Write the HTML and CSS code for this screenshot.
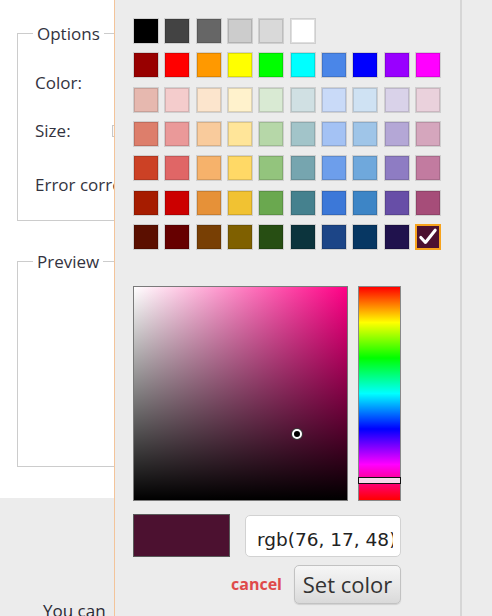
FILE: index.html
```html
<!DOCTYPE html>
<html>
<head>
<meta charset="utf-8">
<link rel="stylesheet" href="styles.css">
</head>
<body>
<div class="page">
  <div class="form">
    <fieldset class="group options">
      <legend>Options</legend>
      <div class="field f-color">Color:</div>
      <div class="field f-size">Size:<span class="size-input"></span></div>
      <div class="field f-error">Error correction</div>
    </fieldset>
    <fieldset class="group preview">
      <legend>Preview</legend>
      <div class="preview-area"></div>
    </fieldset>
  </div>
  <div class="footer">You can</div>
</div>

<div class="popup">
  <div class="palette">
    <span class="sw" style="background:#000000"></span>
    <span class="sw" style="background:#434343"></span>
    <span class="sw" style="background:#666666"></span>
    <span class="sw" style="background:#cccccc"></span>
    <span class="sw" style="background:#d9d9d9"></span>
    <span class="sw" style="background:#ffffff"></span>
    <span class="spacer"></span>

    <span class="sw" style="background:#980000"></span>
    <span class="sw" style="background:#ff0000"></span>
    <span class="sw" style="background:#ff9900"></span>
    <span class="sw" style="background:#ffff00"></span>
    <span class="sw" style="background:#00ff00"></span>
    <span class="sw" style="background:#00ffff"></span>
    <span class="sw" style="background:#4a86e8"></span>
    <span class="sw" style="background:#0000ff"></span>
    <span class="sw" style="background:#9900ff"></span>
    <span class="sw" style="background:#ff00ff"></span>

    <span class="sw" style="background:#e6b8af"></span>
    <span class="sw" style="background:#f4cccc"></span>
    <span class="sw" style="background:#fce5cd"></span>
    <span class="sw" style="background:#fff2cc"></span>
    <span class="sw" style="background:#d9ead3"></span>
    <span class="sw" style="background:#d0e0e3"></span>
    <span class="sw" style="background:#c9daf8"></span>
    <span class="sw" style="background:#cfe2f3"></span>
    <span class="sw" style="background:#d9d2e9"></span>
    <span class="sw" style="background:#ead1dc"></span>

    <span class="sw" style="background:#dd7e6b"></span>
    <span class="sw" style="background:#ea9999"></span>
    <span class="sw" style="background:#f9cb9c"></span>
    <span class="sw" style="background:#ffe599"></span>
    <span class="sw" style="background:#b6d7a8"></span>
    <span class="sw" style="background:#a2c4c9"></span>
    <span class="sw" style="background:#a4c2f4"></span>
    <span class="sw" style="background:#9fc5e8"></span>
    <span class="sw" style="background:#b4a7d6"></span>
    <span class="sw" style="background:#d5a6bd"></span>

    <span class="sw" style="background:#cc4125"></span>
    <span class="sw" style="background:#e06666"></span>
    <span class="sw" style="background:#f6b26b"></span>
    <span class="sw" style="background:#ffd966"></span>
    <span class="sw" style="background:#93c47d"></span>
    <span class="sw" style="background:#76a5af"></span>
    <span class="sw" style="background:#6d9eeb"></span>
    <span class="sw" style="background:#6fa8dc"></span>
    <span class="sw" style="background:#8e7cc3"></span>
    <span class="sw" style="background:#c27ba0"></span>

    <span class="sw" style="background:#a61c00"></span>
    <span class="sw" style="background:#cc0000"></span>
    <span class="sw" style="background:#e69138"></span>
    <span class="sw" style="background:#f1c232"></span>
    <span class="sw" style="background:#6aa84f"></span>
    <span class="sw" style="background:#45818e"></span>
    <span class="sw" style="background:#3c78d8"></span>
    <span class="sw" style="background:#3d85c6"></span>
    <span class="sw" style="background:#674ea7"></span>
    <span class="sw" style="background:#a64d79"></span>

    <span class="sw" style="background:#5b0f00"></span>
    <span class="sw" style="background:#660000"></span>
    <span class="sw" style="background:#783f04"></span>
    <span class="sw" style="background:#7f6000"></span>
    <span class="sw" style="background:#274e13"></span>
    <span class="sw" style="background:#0c343d"></span>
    <span class="sw" style="background:#1c4587"></span>
    <span class="sw" style="background:#073763"></span>
    <span class="sw" style="background:#20124d"></span>
    <span class="sw selected" style="background:#4c1130">
      <svg class="check" viewBox="0 0 26 26" width="22" height="22"><path d="M4.5 13.5 L10 19.5 L21.5 5" fill="none" stroke="#fff" stroke-width="3.6" stroke-linecap="round" stroke-linejoin="round"/></svg>
    </span>
  </div>

  <div class="picker">
    <div class="sv">
      <span class="sv-dot"></span>
    </div>
    <div class="hue">
      <span class="hue-handle"></span>
    </div>
  </div>

  <div class="value-row">
    <div class="current"></div>
    <div class="rgb-input"><span class="rgb-text">rgb(76, 17, 48)</span></div>
  </div>

  <div class="actions">
    <span class="cancel">cancel</span>
    <span class="set-btn">Set color</span>
  </div>
</div>
</body>
</html>
```

FILE: styles.css
```css
html, body {
  margin: 0;
  padding: 0;
}
body {
  width: 492px;
  height: 616px;
  overflow: hidden;
  background: #ececec;
  position: relative;
  font-family: "Open Sans", "Noto Sans", sans-serif;
  color: #333340;
}

.page {
  width: 300px;
  height: 616px;
  display: flex;
  flex-direction: column;
}
.form {
  flex-shrink: 0;
  background: #ffffff;
  height: 498px;
  padding-top: 22px;
  box-sizing: border-box;
}
.group {
  margin: 0 0 0 17px;
  padding: 0 0 0 17px;
  border: 1px solid #cccccc;
  width: 300px;
  box-sizing: border-box;
}
.group legend {
  font-size: 17px;
  line-height: 23px;
  padding: 0 4px;
  margin-left: -2px;
}
.field {
  font-size: 17px;
  line-height: 23px;
  white-space: nowrap;
}
.f-color { margin-top: 26px; }
.f-size { margin-top: 25px; display: flex; align-items: center; }
.f-error { margin-top: 31px; margin-bottom: 24px; }
.size-input {
  display: inline-block;
  width: 20px;
  height: 10px;
  margin-left: 41px;
  border: 1px solid #c8c8c8;
  background: #fafafa;
}
.preview { margin-top: 29px; }
.preview-area { height: 193px; }

.footer {
  flex: 1;
  min-height: 0;
  overflow: hidden;
  background: #ececec;
  padding: 104px 0 0 43px;
  font-size: 17px;
  line-height: 17px;
  color: #2a2a35;
  white-space: nowrap;
}

/* popup */
.popup {
  position: absolute;
  left: 114px;
  top: 0;
  width: 348px;
  height: 616px;
  box-sizing: border-box;
  background: #ececec;
  border-left: 1px solid #f3c49a;
  border-right: 2px solid #d6d6d6;
  padding: 18px 0 0 18px;
}
.palette {
  display: grid;
  grid-template-columns: repeat(10, 26px);
  grid-auto-rows: 26px;
  column-gap: 5.33px;
  row-gap: 8.33px;
}
.spacer { grid-column: span 4; }
.sw {
  display: block;
  width: 26px;
  height: 26px;
  box-sizing: border-box;
  border: 1px solid #cfcfcf;
  box-shadow: inset 0 0 0 1px rgba(0, 0, 0, 0.13);
}
.sw.selected {
  border: 2px solid #f7a31c;
  box-shadow: none;
  display: flex;
  align-items: center;
  justify-content: center;
}
.check { display: block; }

.picker {
  display: flex;
  gap: 10px;
  margin-top: 36px;
}
.sv {
  position: relative;
  width: 215px;
  height: 215px;
  box-sizing: border-box;
  border: 1px solid #7a7a7a;
  background:
    linear-gradient(to top, #000 0%, rgba(0, 0, 0, 0) 100%),
    linear-gradient(to right, #ffffff 0%, hsl(328.5, 100%, 50%) 100%);
}
.sv-dot {
  position: absolute;
  left: 158px;
  top: 142px;
  width: 6px;
  height: 6px;
  border-radius: 50%;
  background: #000;
  border: 2px solid #fff;
  box-shadow: 0 0 0 1px #3a3a3a;
}
.hue {
  position: relative;
  width: 43px;
  height: 215px;
  box-sizing: border-box;
  border: 1px solid #888;
  background: linear-gradient(to bottom,
    #ff0000 0%, #ffff00 16.67%, #00ff00 33.33%, #00ffff 50%,
    #0000ff 66.67%, #ff00ff 83.33%, #ff0000 100%);
}
.hue-handle {
  position: absolute;
  left: -1px;
  right: -1px;
  top: 190px;
  height: 7px;
  box-sizing: border-box;
  border: 1px solid #111;
  background: #f7d9ea;
}

.value-row {
  display: flex;
  align-items: flex-start;
  margin-top: 13px;
}
.current {
  width: 97px;
  height: 43px;
  box-sizing: border-box;
  border: 1px solid #5a5a5a;
  background: #4c1130;
}
.rgb-input {
  margin-left: 15px;
  margin-top: 1px;
  width: 156px;
  height: 42px;
  box-sizing: border-box;
  border: 1px solid #d2d2d2;
  border-radius: 5px;
  background: #fff;
  padding: 8px 7px 0 11px;
}
.rgb-text {
  display: block;
  overflow: hidden;
  white-space: nowrap;
  font-family: "DejaVu Sans", sans-serif;
  font-size: 18.5px;
  line-height: 32px;
  color: #222;
}

.actions {
  width: 268px;
  margin-top: 8px;
  display: flex;
  justify-content: flex-end;
  align-items: center;
  gap: 12px;
}
.cancel {
  font-family: "Open Sans", sans-serif;
  font-weight: 700;
  font-size: 16px;
  color: #df4a4a;
}
.set-btn {
  width: 107px;
  height: 39px;
  box-sizing: border-box;
  border: 1px solid #c2c2c2;
  border-radius: 5px;
  background: linear-gradient(to bottom, #f6f6f6 0%, #e9e9e9 50%, #d9d9d9 100%);
  box-shadow: 0 1px 1px rgba(0, 0, 0, 0.12);
  display: flex;
  align-items: center;
  justify-content: center;
  font-family: "Open Sans", sans-serif;
  font-size: 22px;
  color: #333;
}
```
